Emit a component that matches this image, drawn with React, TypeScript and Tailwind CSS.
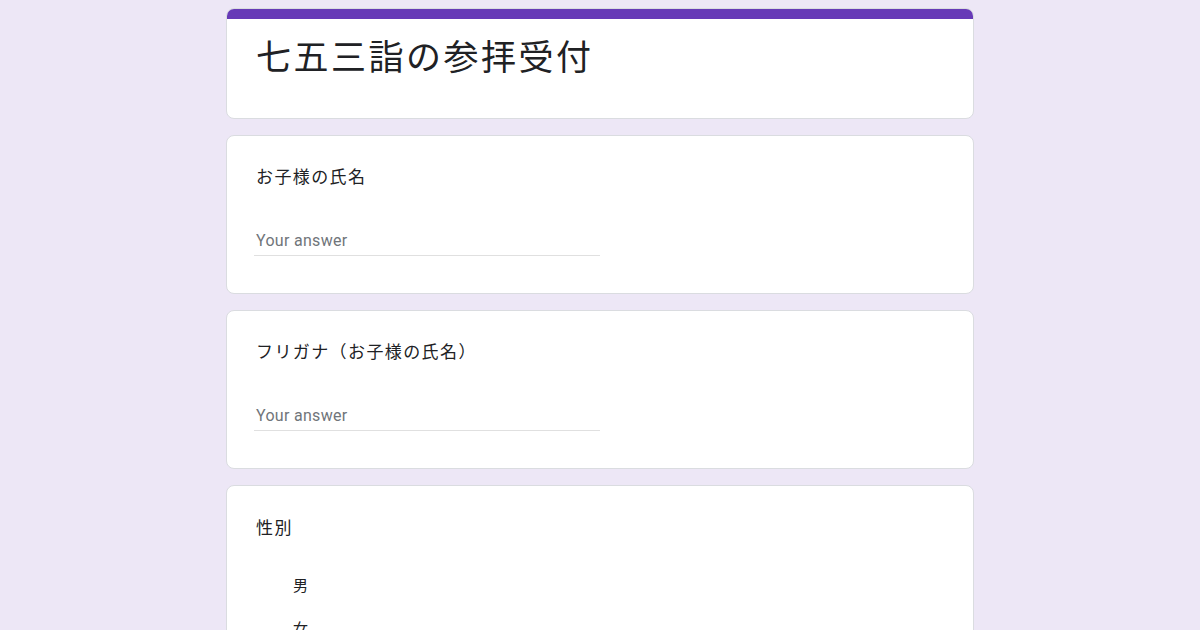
import React from 'react';

const font = "font-['Roboto','Noto_Sans_CJK_JP',sans-serif]";

const TextQuestion: React.FC<{ label: string }> = ({ label }) => (
  <div className="bg-white border border-[#dadce0] rounded-lg pt-[29px] pb-[37px] px-[29px]">
    <div className="text-[17px] leading-[24px] tracking-[1.4px] text-[#202124]">{label}</div>
    <div className="mt-[40px] w-[346px] border-b border-[#e0e0e0] pb-[2px] -ml-[2px] pl-[2px]">
      <span className="text-[16px] leading-[20px] text-[#70757a] tracking-[0.3px]">Your answer</span>
    </div>
  </div>
);

export default function App() {
  return (
    <div className={`min-h-[630px] h-[630px] overflow-hidden bg-[#ede7f6] ${font}`}>
      <div className="w-[748px] mx-auto pt-2 flex flex-col gap-4">
        <div className="bg-white border border-[#dadce0] rounded-lg overflow-hidden">
          <div className="h-[10px] bg-[#673ab7]" />
          <div className="px-[29px] pt-[17px] pb-[36px]">
            <h1 className="text-[35px] leading-[46px] tracking-[2.5px] text-[#202124]">七五三詣の参拝受付</h1>
          </div>
        </div>
        <TextQuestion label="お子様の氏名" />
        <TextQuestion label="フリガナ（お子様の氏名）" />
        <div className="bg-white border border-[#dadce0] rounded-lg pt-[30px] px-[29px] pb-10">
          <div className="text-[17px] leading-[24px] tracking-[1.4px] text-[#202124]">性別</div>
          <div className="mt-[34px] pl-[37px] flex flex-col gap-[19px]">
            <div className="text-[15px] leading-[24px] text-[#202124]">男</div>
            <div className="text-[15px] leading-[24px] text-[#202124]">女</div>
          </div>
        </div>
      </div>
    </div>
  );
}
